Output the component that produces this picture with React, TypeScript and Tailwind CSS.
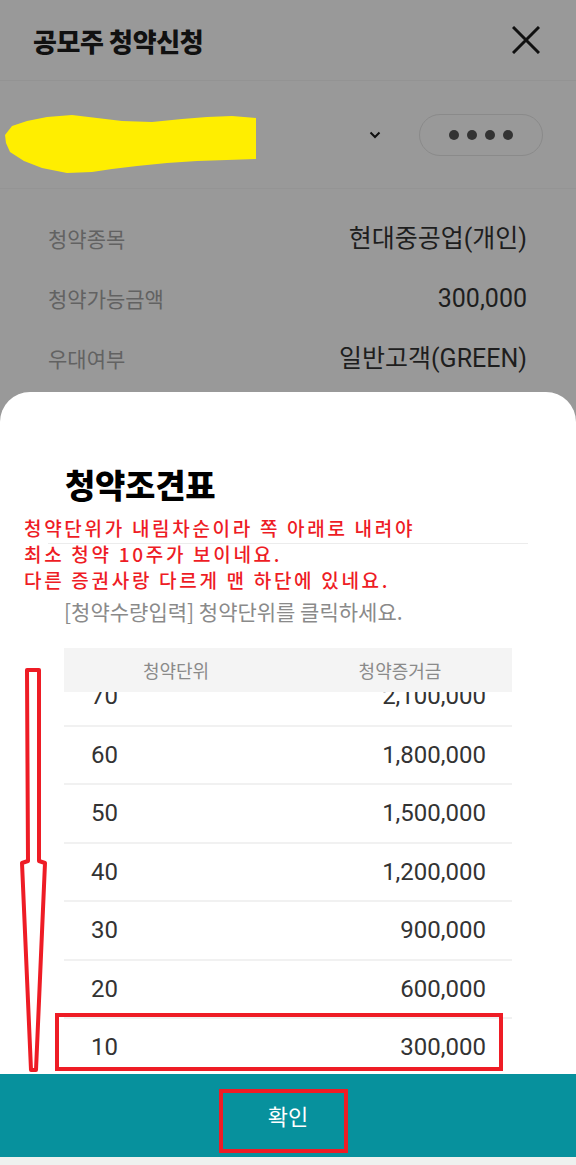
import React from "react";

const rows = [
  ["70", "2,100,000"],
  ["60", "1,800,000"],
  ["50", "1,500,000"],
  ["40", "1,200,000"],
  ["30", "900,000"],
  ["20", "600,000"],
  ["10", "300,000"],
];

const font = { fontFamily: '"Noto Sans CJK KR", "Noto Sans", sans-serif' };
const numFont = { fontFamily: 'Roboto, "Noto Sans CJK KR", sans-serif' };

export default function App() {
  return (
    <div className="relative w-[576px] h-[1165px] overflow-hidden bg-[#999999] flex flex-col" style={font}>
      {/* Header */}
      <div className="h-[81px] shrink-0 flex items-center justify-between pl-[33px] pr-[36px] border-b border-[#939393]">
        <div className="text-[26px] font-extrabold text-[#111] tracking-[-0.4px]">공모주 청약신청</div>
        <svg width="28" height="28" viewBox="0 0 28 28">
          <path d="M1 1 L27 27 M27 1 L1 27" stroke="#111" strokeWidth="3" fill="none" />
        </svg>
      </div>

      {/* Account row */}
      <div className="h-[108px] shrink-0 flex items-center border-b border-[#949494]">
        <svg width="260" height="64" viewBox="0 0 260 64" className="ml-[2px] mt-[16px] shrink-0">
          <path
            d="M3 24 L10 15 L25 10 L45 6 L70 4 L95 7 L120 10 L150 11 L180 8 L205 6 L230 5 L254 7 L254 48 L225 49 L195 50 L165 52 L135 55 L110 58 L90 61 L65 62 L40 57 L22 50 L8 41 L4 32 Z"
            fill="#ffee00"
          />
        </svg>
        <div className="ml-[107px] shrink-0">
          <svg width="12" height="8" viewBox="0 0 12 8">
            <path d="M1.5 1.5 L6 6 L10.5 1.5" stroke="#111" strokeWidth="2" fill="none" />
          </svg>
        </div>
        <div className="ml-[38px] w-[124px] h-[42px] rounded-full border-[1.5px] border-[#8a8a8a] flex items-center justify-center gap-[8px]">
          <span className="w-[10px] h-[10px] rounded-full bg-[#333]" />
          <span className="w-[10px] h-[10px] rounded-full bg-[#333]" />
          <span className="w-[10px] h-[10px] rounded-full bg-[#333]" />
          <span className="w-[10px] h-[10px] rounded-full bg-[#333]" />
        </div>
      </div>

      {/* Info rows */}
      <div className="h-[203px] shrink-0 pt-[20px] pl-[48px] pr-[49px]">
        {[
          ["청약종목", "현대중공업(개인)"],
          ["청약가능금액", "300,000"],
          ["우대여부", "일반고객(GREEN)"],
        ].map(([l, v]) => (
          <div key={l} className="h-[60px] flex items-center justify-between">
            <span className="text-[21px] text-[#626262]">{l}</span>
            <span className="text-[25px] text-[#1e1e1e]" style={numFont}>{v}</span>
          </div>
        ))}
      </div>

      {/* Modal */}
      <div className="flex-1 bg-white rounded-t-[30px] flex flex-col">
        <div className="pt-[72px] pl-[65px] h-[112px] shrink-0">
          <div className="text-[33px] leading-[40px] font-black text-black tracking-[-0.3px]">청약조견표</div>
        </div>
        <div className="mt-[39px] ml-[48px] w-[480px] h-[1px] bg-[#ececec] shrink-0" />
        <div className="pt-[53px] pl-[64px] shrink-0">
          <div className="text-[21px] leading-[28px] text-[#8a8a8a]">[청약수량입력] 청약단위를 클릭하세요.</div>
        </div>
        <div className="mt-[23px] mx-[64px] h-[44px] shrink-0 bg-[#f4f4f4] grid grid-cols-2 items-center text-[18px] text-[#8a8a8a]">
          <div className="text-center">청약단위</div>
          <div className="text-center">청약증거금</div>
        </div>
        <div className="h-[382px] shrink-0 mx-[64px] overflow-hidden">
          <div className="-mt-[24px]">
            {rows.map(([u, m], i) => (
              <div key={u}>
                {i > 0 && <div className="h-[2px] bg-[#f1f1f1]" />}
                <div className="h-[56.5px] flex items-center justify-between pl-[27px] pr-[26px] text-[24px] text-[#333]" style={numFont}>
                  <span>{u}</span>
                  <span>{m}</span>
                </div>
              </div>
            ))}
          </div>
        </div>
        <div className="h-[83px] shrink-0 bg-[#07919d] flex items-center justify-center">
          <span className="text-[22px] text-white">확인</span>
        </div>
        <div className="flex-1 bg-[#eef1ef]" />
      </div>

      {/* Annotations */}
      <div
        className="absolute left-[24px] top-[515px] text-[19px] leading-[26px] text-[#ee1c25] font-medium tracking-[2.7px]"
        style={font}
      >
        <div>청약단위가 내림차순이라 쪽 아래로 내려야</div>
        <div>최소 청약 10주가 보이네요.</div>
        <div>다른 증권사랑 다르게 맨 하단에 있네요.</div>
      </div>
      <svg className="absolute left-0 top-[660px]" width="60" height="420" viewBox="0 660 60 420">
        <path
          d="M27 670 L39 670 L39 861 L45 863 L36 1070 L31 1070 L22 863 L28 861 Z"
          fill="none"
          stroke="#ee1c25"
          strokeWidth="4"
          strokeLinejoin="round"
        />
      </svg>
      <div className="absolute left-[55px] top-[1013px] w-[448px] h-[58px] border-[4px] border-[#ee1c25]" />
      <div className="absolute left-[219px] top-[1089px] w-[129px] h-[64px] border-[4px] border-[#ee1c25]" />
    </div>
  );
}
